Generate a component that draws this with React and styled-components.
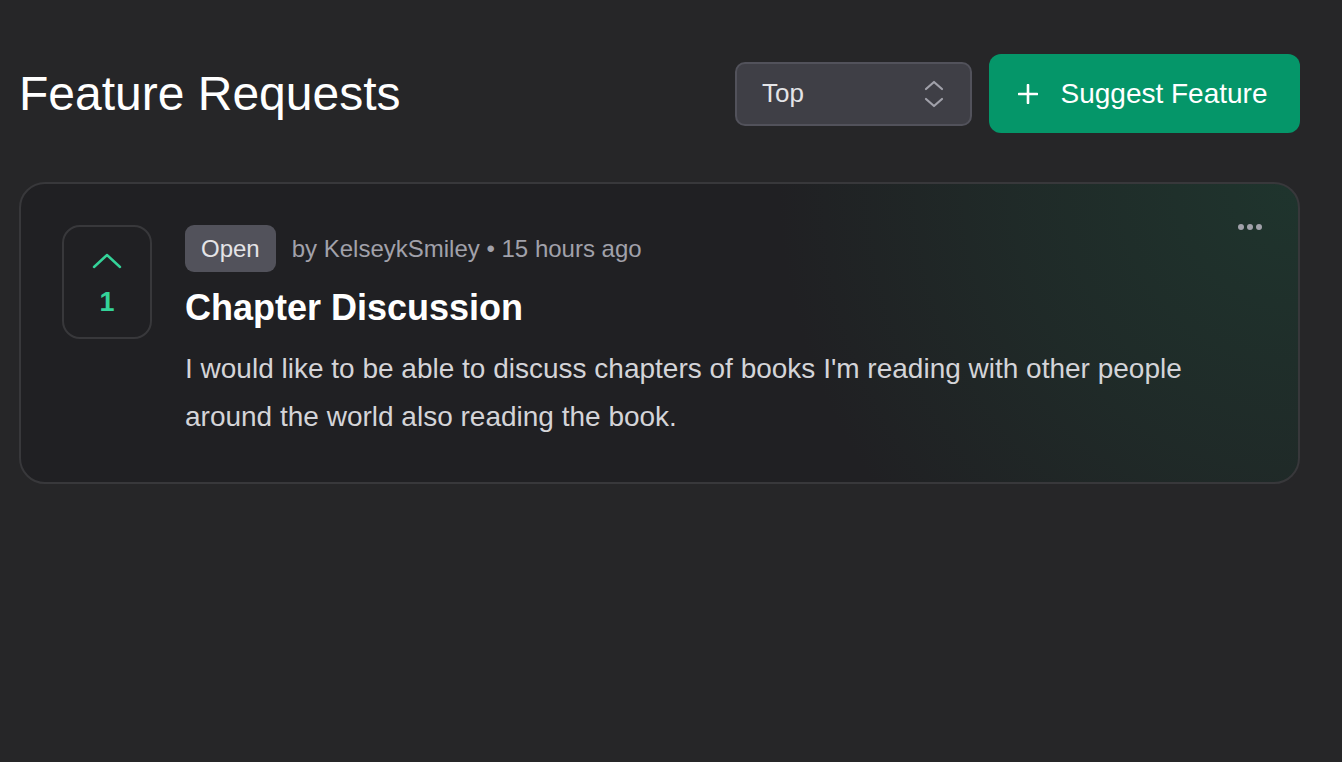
import React from "react";
import styled, { createGlobalStyle } from "styled-components";

const Global = createGlobalStyle`
  html, body { margin: 0; padding: 0; background: #262628; }
  body { font-family: "Liberation Sans", Arial, sans-serif; color: #fff; }
  * { box-sizing: border-box; }
`;

const Page = styled.div`
  min-height: 762px;
  padding: 54px 42px 0 19px;
`;

const Header = styled.header`
  display: flex;
  align-items: center;
  justify-content: space-between;
  height: 79px;
`;

const Title = styled.h1`
  margin: 0;
  font-size: 48px;
  font-weight: 400;
  color: #fff;
  line-height: 1;
`;

const Controls = styled.div`
  display: flex;
  align-items: center;
  gap: 17px;
`;

const Select = styled.div`
  width: 237px;
  height: 64px;
  display: flex;
  align-items: center;
  justify-content: space-between;
  padding: 0 25px 0 25px;
  background: #3f3f46;
  border: 2px solid #52525b;
  border-radius: 10px;
  font-size: 26px;
  color: #e4e4e7;
`;

const PrimaryButton = styled.button`
  height: 79px;
  width: 311px;
  display: flex;
  align-items: center;
  justify-content: center;
  gap: 22px;
  background: #059669;
  border: none;
  border-radius: 12px;
  color: #fff;
  font-family: inherit;
  font-size: 28px;
  padding: 0 3px 0 0;
`;

const Card = styled.article`
  position: relative;
  margin-top: 49px;
  display: flex;
  gap: 33px;
  padding: 41px;
  border: 2px solid #38383b;
  border-radius: 26px;
  background:
    radial-gradient(circle at 100% 0%, rgba(30, 66, 52, 0.6) 0px, rgba(30, 66, 52, 0.3) 280px, rgba(30, 66, 52, 0) 520px),
    #202023;
`;

const VoteBox = styled.button`
  flex: none;
  width: 90px;
  height: 114px;
  display: flex;
  flex-direction: column;
  align-items: center;
  justify-content: flex-start;
  gap: 20px;
  padding: 26px 0 0;
  background: transparent;
  border: 2px solid #38383b;
  border-radius: 18px;
  color: #34d399;
  font-family: inherit;
  font-size: 27px;
  font-weight: 700;
  line-height: 1;
`;

const Content = styled.div`
  display: flex;
  flex-direction: column;
  min-width: 0;
`;

const MetaRow = styled.div`
  display: flex;
  align-items: center;
  gap: 16px;
  height: 47px;
`;

const Badge = styled.span`
  display: inline-flex;
  align-items: center;
  height: 47px;
  padding: 0 16px;
  background: #52525b;
  border-radius: 9px;
  color: #e4e4e7;
  font-size: 24px;
`;

const Meta = styled.span`
  color: #a1a1aa;
  font-size: 24px;
`;

const PostTitle = styled.h2`
  margin: 14px 0 15px;
  font-size: 36px;
  line-height: 44px;
  font-weight: 700;
  color: #fff;
`;

const Body = styled.p`
  margin: 0;
  max-width: 1010px;
  font-size: 28px;
  line-height: 48px;
  color: #d4d4d8;
`;

const MenuButton = styled.button`
  position: absolute;
  top: 40px;
  right: 36px;
  background: transparent;
  border: none;
  padding: 0;
  display: flex;
  gap: 3px;
`;

const Dot = styled.span`
  width: 6px;
  height: 6px;
  border-radius: 50%;
  background: #a1a1aa;
`;

export default function App() {
  return (
    <>
      <Global />
      <Page>
        <Header>
          <Title>Feature Requests</Title>
          <Controls>
            <Select>
              <span>Top</span>
              <svg width="22" height="30" viewBox="0 0 22 30" fill="none" stroke="#a1a1aa" strokeWidth="2.2" strokeLinecap="round" strokeLinejoin="round">
                <path d="M3 10 L11 3 L19 10" />
                <path d="M3 20 L11 27 L19 20" />
              </svg>
            </Select>
            <PrimaryButton>
              <svg width="20" height="20" viewBox="0 0 20 20" stroke="#fff" strokeWidth="2.6" strokeLinecap="round">
                <path d="M10 1 V19 M1 10 H19" />
              </svg>
              <span>Suggest Feature</span>
            </PrimaryButton>
          </Controls>
        </Header>

        <Card>
          <VoteBox>
            <svg width="30" height="16" viewBox="0 0 30 16" fill="none" stroke="#34d399" strokeWidth="2.4" strokeLinecap="round" strokeLinejoin="round">
              <path d="M2 14 L15 2 L28 14" />
            </svg>
            <span>1</span>
          </VoteBox>
          <Content>
            <MetaRow>
              <Badge>Open</Badge>
              <Meta>by KelseykSmiley • 15 hours ago</Meta>
            </MetaRow>
            <PostTitle>Chapter Discussion</PostTitle>
            <Body>
              I would like to be able to discuss chapters of books I'm reading with other people around the world also reading the book.
            </Body>
          </Content>
          <MenuButton aria-label="More">
            <Dot />
            <Dot />
            <Dot />
          </MenuButton>
        </Card>
      </Page>
    </>
  );
}
